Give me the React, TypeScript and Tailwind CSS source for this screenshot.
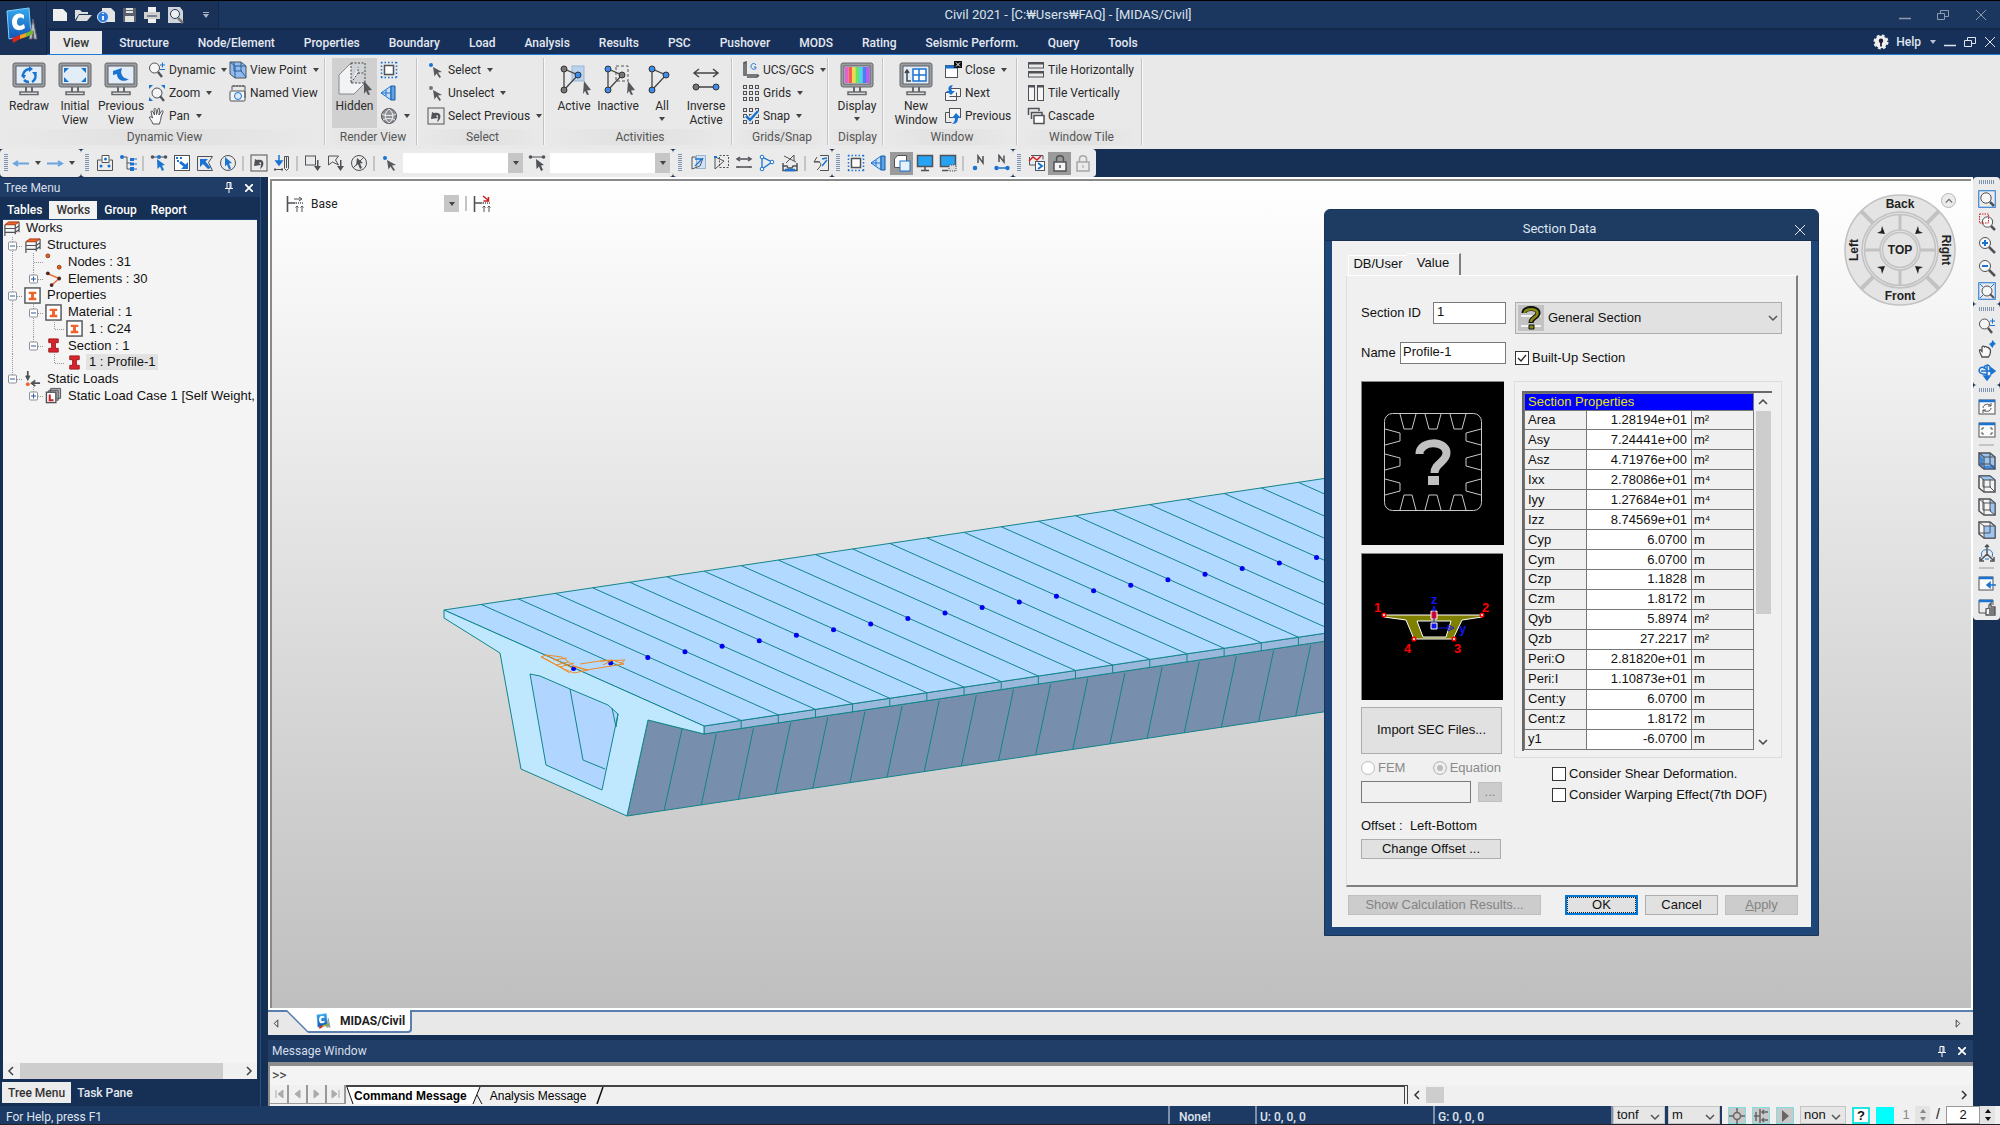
import type { ReactNode } from "react";
import clsx from "clsx";

const UI = "font-['Roboto','Noto_Sans_CJK_KR',sans-serif]";
const DLG = "font-['Liberation_Sans','Noto_Sans_CJK_KR',sans-serif]";

/* ---------- small icons, all drawn on an 18 x 18 grid ---------- */

const G = "#4f5257";
const B = "#1a73d1";

const icons: Record<string, ReactNode> = {
  magPlus: <><circle cx="6.5" cy="7" r="5" fill="#f5f5f5" /><path d="M10 11l4 5" strokeWidth="2.4" /><path d="M12 4h5M14.500 1.500v5M12 8.500h5" stroke={B} /></>,
  magFit: <><circle cx="9" cy="9" r="5" fill="#f5f5f5" /><path d="M12 12l4 5" strokeWidth="2.2" /><path d="M1 5V1h4zM13 1h4v4zM1 13v4h4z" fill={B} stroke="none" /></>,
  hand: <path d="M5 17c-1-3-4-6-3.500-7s2 0 3 1L3 5c0-1.500 1.500-1 2 0l1.500 3L6 2.500c0-1.500 1.500-1.500 2 0l.5 5L10 2c.5-1.500 2-1 1.500.5L11 8l2.500-4c1-1 2 0 1.500 1l-2 5c0 3-1 4-1.500 7z" fill="#fafafa" />,
  cube: <><path d="M1 1h11l5 4v12H6l-5-4z" fill="#8fbcec" /><path d="M1 1l5 4h11M6 5v12M5 1v9h8M12 1v9l5 6" stroke="#2a5d96" /></>,
  camera: <><rect x="1" y="7" width="15" height="10" rx="1" fill="#f5f5f5" /><circle cx="9" cy="12" r="3.500" fill="#dbeafb" stroke={B} /><path d="M3 6V2h13v12M5 1v2M8 1v2M11 1v2M14 1v2" /></>,
  dotSquare: <><rect x="4.500" y="4.500" width="9" height="9" fill="#fff" strokeWidth="1.500" /><path d="M1 1.500h16M1 16.500h16" stroke={B} strokeWidth="1.500" strokeDasharray="1.500 2" /><path d="M1.500 1v16M16.500 1v16" stroke={B} strokeDasharray="1.500 2" strokeWidth="1.500" /></>,
  persp: <><path d="M1 9l10-7v14z" fill="#c7def7" stroke={B} /><path d="M11 2h4v14h-4z" fill="#5ea3e8" stroke="#175a9f" /><path d="M1 9h10M6 6v6" stroke={B} /></>,
  globe: <><circle cx="9" cy="9" r="7.500" fill="#8e9196" /><path d="M2 7c3 2 11 2 14 0M3 13c3-2 9-2 12 0M9 2c-5 4-5 10 0 14M9 2c5 4 5 10 0 14" stroke="#f0f0f0" /></>,
  pick: <><circle cx="4" cy="4" r="2" fill={B} stroke="none" /><path d="M6 6l9 5-4 .5 3 4.500-1.500 1-3-4.500-2 3z" fill="#55585d" stroke="none" /></>,
  unpick: <><circle cx="4" cy="4" r="2" fill="#777" stroke="none" /><path d="M6 6l9 5-4 .5 3 4.500-1.500 1-3-4.500-2 3z" fill="#55585d" stroke="none" /></>,
  undoBox: <><rect x="1" y="1" width="16" height="16" /><path d="M5 5l-1 7 7-1-2-2c2-2 3 1 1 6 5-3 5-11-3-9z" fill={G} stroke="none" /></>,
  ucs: <><path d="M2 1v13h14M2 2l2-1v12M5 16h10l2-2" strokeWidth="1.500" /><path d="M14 4c-2-3-5-1-5 1.500S12 9 14 7.500V6h-2" stroke={B} /></>,
  grids: <>{[1, 7, 13].map((y) => [1, 7, 13].map((x) => <rect key={`${x}-${y}`} x={x + 0.5} y={y + 0.5} width="3" height="3" />))}</>,
  snap: <>{[1, 7, 13].map((y) => [1, 7, 13].map((x) => <rect key={`${x}-${y}`} x={x + 0.5} y={y + 0.5} width="3" height="3" />))}<path d="M4 9l4 4 8-9" stroke="#e9e9e9" strokeWidth="5" /><path d="M4 9l4 4 8-9" stroke={B} strokeWidth="2.500" /></>,
  closeWin: <><rect x="1.500" y="4.500" width="12" height="12" fill="#fff" /><path d="M1.500 5h12v2h-12z" fill={B} stroke={B} /><rect x="10" y="0" width="8" height="7" fill="#111" stroke="none" /><path d="M12 1.500l4 4M16 1.500l-4 4" stroke="#fff" /></>,
  nextWin: <><path d="M5.500 4.500h11v8h-4v4h-11v-8h4z" fill="#f5f5f5" /><path d="M5.500 12.500h7v-4" /><path d="M9 1C4 1 4 5 5 7H2l5 4 4-4H8c-1-2-1-4 1-6z" fill={B} stroke="none" /></>,
  prevWin: <><rect x="5.500" y="1.500" width="11" height="9" fill="#f5f5f5" /><path d="M5.500 5.500h-4v10h6" /><path d="M8 17c5 0 6-3 6-6h3l-5-5-4 5h3c0 3-1 4-3 6z" fill={B} stroke="none" /></>,
  tileH: <><rect x="1.500" y="1.500" width="15" height="5.500" /><rect x="1.500" y="10.500" width="15" height="5.500" /><path d="M1 2.500h16M1 11.500h16" strokeWidth="2" /></>,
  tileV: <><rect x="1.500" y="1.500" width="6" height="15" fill="#f5f5f5" /><rect x="10.500" y="1.500" width="6" height="15" fill="#f5f5f5" /><path d="M1 2.500h7M10 2.500h7" strokeWidth="2" /></>,
  cascade: <><path d="M1.500 8V1.500H12V4M4.500 12V5.500H15V8" strokeWidth="1.500" /><rect x="7" y="8.500" width="10" height="8" fill="#fff" strokeWidth="1.500" /></>,
  arrowL: <path d="M3 9.500h14M6 7L2 9.500 6 12" stroke="#6ba6e0" strokeWidth="2" />,
  arrowR: <path d="M1 9.500h14M12 7l4 2.500-4 2.500" stroke="#6ba6e0" strokeWidth="2" />,
  planeBox: <><path d="M1.500 6v10.500h15V6h-3" /><path d="M6 1.500h7v7H6z" fill="#fff" /><circle cx="9.500" cy="5" r="1.500" fill={B} stroke="none" /><circle cx="5" cy="12" r="1.500" fill={B} stroke="none" /><circle cx="13" cy="12" r="1.500" fill={B} stroke="none" /><path d="M1.500 6h4" /></>,
  treeNodes: <><path d="M3 3h5v12h4M8 9h4" /><circle cx="3" cy="3" r="2" fill={B} stroke="none" /><rect x="11" y="4" width="4" height="3" fill={B} stroke="none" /><rect x="11" y="8.500" width="4" height="3" fill={B} stroke="none" /><rect x="11" y="13" width="4" height="4" fill={B} stroke="none" /><path d="M15 5h3M15 10h3M15 15h3" stroke={B} /></>,
  selLine: <><path d="M2 3h14" /><circle cx="2.500" cy="3" r="1.800" fill={G} stroke="none" /><circle cx="9" cy="3" r="2" fill={B} stroke="none" /><circle cx="15.500" cy="3" r="1.800" fill={G} stroke="none" /><path d="M7 5l8 6-3 .5 2 4.500-2 1-2-4.500-2.500 2.500z" fill={B} stroke="none" /></>,
  selGray: <><path d="M2 3h14" /><circle cx="2.500" cy="3" r="1.800" fill={G} stroke="none" /><circle cx="15.500" cy="3" r="1.800" fill={G} stroke="none" /><path d="M8 5l8 6-3 .5 2 4.500-2 1-2-4.500-2.500 2.500z" fill={G} stroke="none" /></>,
  selWindow: <><rect x="1.500" y="1.500" width="15" height="15" fill="#fff" /><path d="M15 8v7H8l2.500-2.500L6 9l2-2 4.500 3.500z" fill={B} stroke="none" /><path d="M3 4h2M4 7h2M7 4h2" stroke={B} strokeWidth="2" /></>,
  selPoly: <><path d="M1.500 2.500h15l-4 6 4 8h-15z" /><path d="M4 5h8l-2.500 2.500L15 14l-3 1-5-5-3 3z" fill={B} stroke="none" /></>,
  selCircle: <><circle cx="9" cy="9" r="7.500" /><path d="M6 3l7 6-3 .5 2 5-2 1-2-5-2 2z" fill={B} stroke="none" /></>,
  pencil: <><path d="M11.500 2.500h4v12l-2 2-2-2zM13.500 3v11" /><path d="M1 15.500h9M2 14v3M9 14v3" /><path d="M6 1v6M3 7h6l-3 4z" fill={B} stroke={B} strokeWidth="1.500" /></>,
  boxDown: <><rect x="1.500" y="2" width="10" height="9" /><path d="M13 6v6h-3l3.500 5 3.500-5h-2.500V6z" fill={G} stroke="none" /></>,
  polyDown: <><path d="M1.500 2h10l-3 4 3 5-6-3-4 3z" /><path d="M13 6v6h-3l3.500 5 3.500-5h-2.500V6z" fill={G} stroke="none" /></>,
  circX: <><circle cx="9" cy="9" r="7.500" /><path d="M14 3L3 14" /><path d="M7 4l6 5-3 .5 2 4.500-2 1-2-5-2 2z" fill={G} stroke="none" /></>,
  actBox: <><rect x="7.500" y="1.500" width="9" height="13" fill="#cfe2f7" stroke="#9bb5d1" /><path d="M3 3v12l8-3 3-8M3 3h4" /><path d="M6 5h7L6 12" stroke={B} strokeWidth="1.300" /></>,
  inactBox: <><path d="M3 3v12l9-8z" /><path d="M7.500 1.500h9v12h-9z" strokeDasharray="2 1.500" /><path d="M2 3h3" stroke={B} strokeWidth="2" /></>,
  lines2: <><path d="M3 5h12M3 13h12" strokeWidth="1.500" /><path d="M5 3L2 5l3 2M13 3l3 2-3 2M1 13h3M14 13h3" strokeWidth="1.500" /></>,
  tri: <><path d="M4 3v12l10-7z" stroke={B} strokeWidth="1.300" /><circle cx="4" cy="3" r="1.800" fill="#fff" stroke={B} /><circle cx="14" cy="8" r="1.800" fill="#fff" stroke={B} /><circle cx="4" cy="15" r="1.800" fill="#fff" stroke={B} /></>,
  store: <><path d="M2 9v7.500h14V9M2 12h4l1 2h4l1-2h4" strokeWidth="1.500" /><path d="M3 2l12 6M13 1L5 9M13 1v6" /><path d="M4 16h10" stroke={B} strokeWidth="2.500" /></>,
  flip: <><path d="M8 1.500h8.500v15H8M5 3L2 8h6M2 8c6-2 10 2 3 8" /><path d="M10 5l5-1M10 12l5-6" stroke={B} strokeWidth="1.500" /></>,
  shapes: <><path d="M1.500 5l3-3.500h9v9l-3 3h-9z" fill="#fff" /><rect x="7" y="7" width="10" height="10" fill="#e6f1fc" stroke={B} /></>,
  screen: <><rect x="1.500" y="1.500" width="15" height="11" fill="#27a3f3" strokeWidth="1.500" /><path d="M9 13v3M5 16.500h8" strokeWidth="1.500" /></>,
  screenDots: <><rect x="1.500" y="1.500" width="15" height="11" fill="#27a3f3" strokeWidth="1.500" /><path d="M3 16.500h6" strokeWidth="1.500" /><path d="M10 11h7v6h-7z" fill="#ddd" strokeDasharray="1 1" /></>,
  nNode: <><path d="M8 9V2l5 7V2" strokeWidth="1.500" /><circle cx="5" cy="14" r="2.300" fill={B} stroke="none" /></>,
  nElem: <><path d="M6 8V1.500L11 8V1.500" strokeWidth="1.500" /><path d="M4 14h10" stroke={B} strokeWidth="1.500" /><circle cx="3.500" cy="14" r="2.200" fill={B} stroke="none" /><circle cx="14.500" cy="14" r="2.200" fill={B} stroke="none" /></>,
  result: <><path d="M1.500 3v8h6M3 1.500h12v4" /><path d="M1 7l4-4 4 3 4-4" stroke="#d02020" strokeWidth="1.500" /><rect x="7.500" y="7.500" width="9" height="9" fill="#fff" /><path d="M10 9l4 3-4 3" stroke={B} strokeWidth="2" /></>,
  lock: <><path d="M5.500 8V5c0-4.500 7-4.500 7 0v3" strokeWidth="1.500" /><rect x="3" y="8" width="12" height="9" fill="#f4f4f4" strokeWidth="1.500" /><path d="M9 11v3" strokeWidth="1.500" /></>,
  unlock: <g stroke="#a4a6a9"><path d="M5.500 8V5c0-4.500 7-4.500 7 0v3" strokeWidth="1.500" /><rect x="3" y="8" width="12" height="9" strokeWidth="1.500" /><path d="M9 11v3" /></g>,
  zoomAll: <><rect x=".75" y=".75" width="16.500" height="16.500" stroke={B} /><circle cx="8" cy="8" r="5.200" fill="#f7f7f7" /><path d="M12 12l4 4" strokeWidth="2.500" /></>,
  zoomWin: <><circle cx="9.500" cy="9" r="5.200" fill="#f7f7f7" /><path d="M13 13l4 4" strokeWidth="2.500" /><rect x="1.500" y="1" width="9" height="9" stroke="#d02020" strokeDasharray="1.500 1" /></>,
  zoomIn: <><circle cx="7" cy="7" r="5.500" fill="#f7f7f7" /><path d="M11 11l6 6" strokeWidth="2.500" /><path d="M4 7h6M7 4v6" stroke={B} strokeWidth="2" /></>,
  zoomOut: <><circle cx="7" cy="7" r="5.500" fill="#f7f7f7" /><path d="M11 11l6 6" strokeWidth="2.500" /><path d="M4 7h6" stroke={B} strokeWidth="2" /></>,
  zoomFit: <><rect x=".75" y=".75" width="16.500" height="16.500" stroke={B} /><circle cx="9" cy="9" r="5" fill="#f7f7f7" /><path d="M12 12l4 4" strokeWidth="2" /><path d="M2 2l3 3M16 2l-3 3M2 16l3-3" stroke={B} /></>,
  panHand: <><path d="M4 17c-1-3-3-5-2.500-7 1-1 2 1 2.500 1.500V7c1-1.500 2-1 2.500 0 1-1 2-.5 2.500.5 1-.5 2 0 2 1 1.500 0 1.500 1 1.500 3 0 3-1 4-2 5.500z" fill="#fafafa" strokeWidth="1.300" /><path d="M14.500 0l2 2.500L18 4l-2 1-1.500 3L12 5l-1-1 2.500-1.500z" fill={B} stroke="none" /></>,
  orbit: <><path d="M9 2v14M9 17l-3-4h6zM3 8h13M17 8l-4-3v6z" fill={B} stroke={B} strokeWidth="1.500" /><path d="M9 11C3 12 0 9 1.500 6S8 4 9 8M6 6c0-5 6-5 6-1v4" stroke={B} strokeWidth="1.500" /></>,
  winRedraw: <><rect x="1" y="2" width="16" height="14" fill="#fafafa" /><path d="M1 3h16" stroke={B} strokeWidth="2.500" /><path d="M5 10c0-4 6-5 8-2M13 10c0 4-6 4-8 2M13 5v3h-3M5 15v-3h3" /></>,
  winFit: <><rect x="1" y="2" width="16" height="14" fill="#fafafa" /><path d="M1 3h16" stroke={B} strokeWidth="2.500" /><path d="M4 9V7h2M12 7h2v2M4 11v2h2M12 13h2v-2" /></>,
  cubeIso: <><path d="M1 1h11l5 4v12H6l-5-4z" fill="#9dc5f0" strokeWidth="1.500" /><path d="M2 3l3 3v9l-3-2zM6 14l11-1v4H6z" fill={B} stroke="none" opacity=".7" /><path d="M1 1l5 4h11M6 5v12M12 1v11l5 5M12 12H2" strokeWidth="1.200" /></>,
  cubeTop: <><path d="M1 1h11l5 4v12H6l-5-4z" fill="#f4f4f4" strokeWidth="1.500" /><path d="M1 1h11l5 4H6z" fill="#9dc5f0" /><path d="M6 5v12M5 4v8h8M12 4v8l5 5" /></>,
  cubeRight: <><path d="M1 1h11l5 4v12H6l-5-4z" fill="#f4f4f4" strokeWidth="1.500" /><path d="M12 1l5 4v12l-5-4z" fill="#9dc5f0" /><path d="M1 1l5 4h11M6 5v12M5 12h8M5 1v11" /></>,
  cubeFront: <><path d="M1 1h11l5 4v12H6l-5-4z" fill="#f4f4f4" strokeWidth="1.500" /><path d="M6 5h11v12H6z" fill="#9dc5f0" /><path d="M1 1l5 4M12 1v11H1" /></>,
  axes: <><path d="M9 2v8l-6 6M9 10l6 6M7 3l2-2 2 2M2 13v4h4M12 17h4v-4" strokeWidth="1.500" /><path d="M4 13c-2-5 2-8 4-7M14 13c2-5-2-8-4-7M7 15h4" stroke={B} /></>,
  winArrow: <><rect x="1" y="2" width="14" height="13" fill="#fafafa" /><path d="M1 3h14" stroke={B} strokeWidth="2.500" /><path d="M18 10h-6M12 7.500L9 10l3 2.500z" fill={B} stroke={B} strokeWidth="1.500" /></>,
  winHand: <><path d="M8 15H1V2h14v5" /><path d="M1 3h14" stroke={B} strokeWidth="2.500" /><path d="M8 17V11l3-1V7l2-2v4h4v8zM11 11h6M11 13h6M11 15h6" fill="#f4f4f4" strokeWidth="1.300" /></>,
  stage: <><path d="M1.500 1v16M1.500 8h8" strokeWidth="1.600" /><path d="M8 4h7M13 2l3 2-3 2" /><path d="M10 8h8" strokeDasharray="1 1" strokeWidth="1.500" /><path d="M11 17v-6M9.500 12.500L11 11l1.500 1.500M16 17v-6M14.500 12.500L16 11l1.500 1.500" /></>,
  stageRed: <><path d="M1.500 1v16M1.500 8h8" strokeWidth="1.600" /><path d="M10 1l5 4M15.500 2v4h-5" stroke="#c81e1e" strokeWidth="1.500" /><path d="M10 8h8" strokeDasharray="1 1" strokeWidth="1.500" /><path d="M11 17v-6M9.500 12.500L11 11l1.500 1.500M16 17v-6M14.500 12.500L16 11l1.500 1.500" /></>,
  newFile: <path d="M2 3h10l4 4v8H2z" fill="#eee" stroke="none" />,
  openFile: <path d="M1 14V4h5l2 2h6v2H5zM5 9h13l-5 6H2z" fill="#ddd" stroke="none" />,
  infoFile: <><path d="M5 2h9l4 4v10H5z" fill="#e4e4e4" stroke="none" /><circle cx="6" cy="11" r="5.500" fill="#2f7be0" stroke="#dfe8f5" /><path d="M6 7v1M6 10v4" stroke="#fff" strokeWidth="1.800" /></>,
  save: <><path d="M3 2h13v14H3z" fill="#59606c" stroke="none" /><path d="M6 2h7v5H6zM5 10h9v6H5z" fill="#e2e2e2" stroke="none" /><path d="M6 4.500h7" stroke="#59606c" /></>,
  print: <><path d="M5 1h8v5H5zM5 12h8v5H5z" fill="#eee" stroke="none" /><path d="M1 6h16v7H1z" fill="#cfcfcf" stroke="none" /><path d="M4 10h10" stroke="#24395c" /></>,
  preview: <><path d="M2 1h12l3 4v12H2z" fill="#cfd3da" stroke="none" /><circle cx="9" cy="8" r="4.500" fill="#eee" stroke="#24395c" /><path d="M12 12l5 5" stroke="#777" strokeWidth="2.500" /></>,
  frame: <><path d="M2 5l4-3h11l-4 3z" fill="#f0622b" stroke="#a33c12" /><path d="M2 5v12M13 5v10M17 2v11M2 9h11l4-3M2 13h11l4-3" strokeWidth="1.300" /></>,
  nodes: <><circle cx="3" cy="3" r="2" fill="#e8641e" stroke="#8a3a10" /><circle cx="15" cy="15" r="2" fill="#e8641e" stroke="#8a3a10" /></>,
  elems: <><path d="M3 4l12 5-8 7" stroke="#f0703a" strokeWidth="1.500" /><g fill="#4a2a24" stroke="none"><circle cx="3" cy="3.500" r="2" /><circle cx="15" cy="9" r="2" /><circle cx="7" cy="16" r="2" /></g></>,
  ibeam: <><rect x="1" y="1" width="16" height="16" fill="#fff" strokeWidth="1.500" /><path d="M5 5h8v2.500h-2.500v4H13V14H5v-2.500h2.500v-4H5z" fill="#f0622b" stroke="none" /></>,
  section: <path d="M4 2h10v4h-3v6h3v4H4v-4h3V6H4z" fill="#d8232c" stroke="#9c1a20" />,
  loads: <><path d="M4 1v8M2 6l2 4 2-4M17 14H9M12 11l-4 3 4 3" strokeWidth="1.800" /><circle cx="4" cy="15" r="2" fill="#f0622b" stroke="none" /></>,
  loadCase: <><path d="M6 5V1.500h10.500V12H13M4 7V3.500h10V14H12" fill="#b5b5b5" /><rect x="1.500" y="5.500" width="10" height="11" fill="#fff" strokeWidth="1.500" /><path d="M5 8v6h4" stroke="#c9202a" strokeWidth="2.200" /></>,
};

function Icon({ name, size = "h-[18px] w-[18px]" }: { name: string; size?: string }) {
  return <svg viewBox="0 0 18 18" className={clsx(size, "shrink-0")} fill="none" stroke={G} aria-hidden>{icons[name]}</svg>;
}

function Caret() {
  return <span className="block h-0 w-0 border-x-[3px] border-t-[4px] border-x-transparent border-t-[#444]" />;
}

function Chevron({ d, className = "h-[10px] w-[10px]" }: { d: string; className?: string }) {
  return <svg viewBox="0 0 10 10" className={clsx("shrink-0", className)} fill="none" stroke="currentColor" strokeWidth="1.500" aria-hidden><path d={d} /></svg>;
}

const UP = "M1 7l4-4 4 4";
const DOWN = "M1 3l4 4 4-4";
const LEFT = "M7 1L3 5l4 4";
const RIGHT = "M3 1l4 4-4 4";

function Logo({ className }: { className: string }) {
  return (
    <svg viewBox="0 0 34 36" className={className} aria-hidden>
      <defs>
        <linearGradient id="logo" x1="0" y1="0" x2="0" y2="1"><stop offset="0" stopColor="#36a9ee" /><stop offset="1" stopColor="#1254b4" /></linearGradient>
      </defs>
      <path d="M3 4l22-3 2 27-22 4z" fill="url(#logo)" stroke="#7fd0ff" />
      <path d="M20 8c-6-4-12 0-12 7s6 11 13 6l-1-4c-4 3-7 2-7-2s3-6 7-3z" fill="#fff" />
      <path d="M29 12l-4 20h3l1-8 1 8h3z" fill="#b9bec6" stroke="#5d636d" />
      <path d="M8 31l8-3v4l-7 4z" fill="#d8291c" /><path d="M16 28l6-2v4l-6 2z" fill="#f3a321" /><path d="M22 26l7-3v4l-7 3z" fill="#78b82a" />
    </svg>
  );
}

/* ---------- header ---------- */

const menu = ["View", "Structure", "Node/Element", "Properties", "Boundary", "Load", "Analysis", "Results", "PSC", "Pushover", "MODS", "Rating", "Seismic Perform.", "Query", "Tools"];

function WinGlyph({ kind }: { kind: "min" | "max" | "close" }) {
  return (
    <svg viewBox="0 0 12 12" className="h-[12px] w-[12px]" fill="none" stroke="currentColor" aria-hidden>
      {kind === "min" && <path d="M0 9.500h12" strokeWidth="1.500" />}
      {kind === "max" && <path d="M.5 4.500h7v6h-7zM3.500 4V1.500h8v6H8" />}
      {kind === "close" && <path d="M1 1l10 10M11 1L1 11" />}
    </svg>
  );
}

function Header() {
  return (
    <header className="flex border-t border-black bg-[#17305a]">
      <button aria-label="Application menu" className="flex w-[47px] shrink-0 items-start justify-center border-r border-[#122747] bg-[#1a3257] pt-[6px] pr-[4px]">
        <Logo className="h-[36px] w-[34px]" />
      </button>
      <div className="min-w-0 flex-1">
        <div className="flex h-[29px] items-center border-b-2 border-[#13294a] bg-[#1c375f]">
          <div className="flex h-full w-[172px] shrink-0 items-center gap-[5px] border-r border-[#13294a] bg-[#1a3257] pl-[4px]">
            {["newFile", "openFile", "infoFile", "save", "print", "preview"].map((n) => (
              <button key={n} aria-label={n} className="flex"><Icon name={n} /></button>
            ))}
            <button aria-label="Customize" className="ml-[14px] flex flex-col items-center gap-px">
              <span className="h-px w-[6px] bg-[#aab4c4]" />
              <span className="h-0 w-0 border-x-[3px] border-t-[4px] border-x-transparent border-t-[#aab4c4]" />
            </button>
          </div>
          <h1 className="flex-1 pl-[31px] text-center text-[13px] text-[#dbe2ec]">Civil 2021 - [C:₩Users₩FAQ] - [MIDAS/Civil]</h1>
          <div className="flex text-[#8d9aaf]">
            {(["min", "max", "close"] as const).map((k) => (
              <button key={k} aria-label={k} className="flex w-[38px] justify-center"><WinGlyph kind={k} /></button>
            ))}
          </div>
        </div>
        <nav className="flex h-[25px] items-end border-b border-[#1c7bd6] pl-[3px]">
          {menu.map((m, i) => (
            <button key={m} className={clsx("h-[23px] text-[12px] font-medium", i === 0 ? "mr-[2px] bg-[#ebebeb] px-[13px] text-[#333]" : "pr-[14px] pl-[15px] text-[#e4e9f1]")}>{m}</button>
          ))}
          <div className="ml-auto flex h-full items-center text-[#dfe5ee]">
            <svg viewBox="0 0 18 18" className="mr-[7px] h-[16px] w-[16px]" aria-hidden><circle cx="9" cy="9" r="7" fill="#eee" stroke="#eee" strokeWidth="3" strokeDasharray="3 2.500" /><circle cx="9" cy="7.500" r="2.500" fill="#223" /><path d="M9 8v6" stroke="#223" strokeWidth="2" /></svg>
            <button className="text-[12px] font-medium">Help</button>
            <span className="mr-[4px] ml-[9px] h-0 w-0 border-x-[3px] border-t-[4px] border-x-transparent border-t-[#b8c2d2]" />
            {(["min", "max", "close"] as const).map((k) => (
              <button key={k} aria-label={`${k} document`} className="flex w-[20px] justify-center"><WinGlyph kind={k} /></button>
            ))}
          </div>
        </nav>
      </div>
    </header>
  );
}

/* ---------- ribbon ---------- */

function Monitor({ children, screen = "#e3edf8" }: { children?: ReactNode; screen?: string }) {
  return (
    <svg viewBox="0 0 34 34" className="h-[34px] w-[34px] shrink-0" fill="none" aria-hidden>
      <rect x="1" y="1" width="32" height="24" rx="2" fill="#9b9da0" stroke="#65686c" />
      <rect x="4" y="4" width="26" height="18" fill={screen} stroke="#5c5f63" />
      <path d="M14 25v5M20 25v5" stroke="#65686c" strokeWidth="2" />
      <path d="M8 32.500v-2.500h18v2.500z" fill="#fff" stroke="#65686c" strokeWidth="1.500" />
      {children}
    </svg>
  );
}

function Nodes3({ kind }: { kind: "active" | "inactive" | "all" }) {
  const side = kind === "active" ? "#777" : "#3c8cf0";
  const tip = kind === "inactive" ? "#777" : "#3c8cf0";
  return (
    <svg viewBox="0 0 34 34" className="h-[34px] w-[34px] shrink-0" fill="none" aria-hidden>
      {kind === "active" && <rect x="15" y="4" width="12" height="15" fill="#bcd3ee" stroke="#9ab5d4" />}
      {kind === "inactive" && <rect x="15" y="4" width="12" height="15" stroke="#555" strokeDasharray="3 2" />}
      <path d="M7 7v21L21 13z" stroke="#444" strokeWidth="1.300" />
      <circle cx="7" cy="7" r="3" fill={side} stroke="#333" />
      <circle cx="7" cy="28" r="3" fill={side} stroke="#333" />
      <circle cx="21" cy="13" r="3" fill={tip} stroke="#333" />
      {kind !== "all" && <path d="M27 19l7 9-4 .5 2 4-2 .5-2-4-2 3z" fill="#55585d" />}
    </svg>
  );
}

function BigButton({ icon, label, width, caret, active }: { icon: ReactNode; label: string[]; width: string; caret?: boolean; active?: boolean }) {
  return (
    <button className={clsx("flex h-[70px] flex-col items-center pt-[4px] text-[12px] leading-[14px]", width, active && "bg-[#d0d0d0]")}>
      {icon}
      <span className="mt-[3px] text-center">{label.map((l) => <span key={l} className="block whitespace-nowrap">{l}</span>)}</span>
      {caret && <span className="mt-[4px]"><Caret /></span>}
    </button>
  );
}

function SmallButton({ icon, label, caret }: { icon: string; label?: string; caret?: boolean }) {
  return (
    <button aria-label={label ?? icon} className="flex h-[23px] items-center gap-[3px] text-[12px] whitespace-nowrap">
      <Icon name={icon} />
      {label}
      {caret && <span className="ml-[3px]"><Caret /></span>}
    </button>
  );
}

function Group({ title, width, children }: { title: string; width: string; children: ReactNode }) {
  return (
    <section className={clsx("flex shrink-0 flex-col pt-[3px] pb-[4px]", width)}>
      <div className="flex h-[87px] flex-col border-r border-[#c3c3c3] shadow-[1px_0_0_#f8f8f8]">
        <div className="flex h-[71px] shrink-0 items-start">{children}</div>
        <h2 className="bg-linear-to-r from-transparent via-[#e0e0e0] to-transparent pl-[5px] text-center text-[12px] leading-[16px] text-[#555]">{title}</h2>
      </div>
    </section>
  );
}

function Ribbon() {
  return (
    <div className="flex h-[94px] overflow-hidden bg-[#e9e9e9] text-[#2b2b2b]">
      <Group title="Dynamic View" width="w-[325px]">
        <BigButton width="ml-[6px] w-[46px]" label={["Redraw"]} icon={<Monitor><path d="M11 15a7 7 0 0 1 6-8M23 11a7 7 0 0 1-3 9M17 20a7 7 0 0 1-5-2" stroke={B} strokeWidth="2.500" /><path d="M17 4l4 3-4 3zM9 13l5 0-2 4zM20 10l5 0-2 4z" fill={B} /></Monitor>} />
        <BigButton width="w-[46px]" label={["Initial", "View"]} icon={<Monitor><path d="M6 6h5l-5 5zM28 6v5l-5-5zM6 20v-5l5 5zM28 20h-5l5-5z" fill={B} /></Monitor>} />
        <BigButton width="w-[46px]" label={["Previous", "View"]} icon={<Monitor><path d="M9 9l9-3-1 4c1 5 4 7 8 7-6 4-12 1-12-5l-4 1z" fill={B} /></Monitor>} />
        <div className="ml-[4px] w-[81px]">
          <SmallButton icon="magPlus" label="Dynamic" caret />
          <SmallButton icon="magFit" label="Zoom" caret />
          <SmallButton icon="hand" label="Pan" caret />
        </div>
        <div>
          <SmallButton icon="cube" label="View Point" caret />
          <SmallButton icon="camera" label="Named View" />
        </div>
      </Group>
      <Group title="Render View" width="w-[92px]">
        <BigButton active width="ml-[7px] w-[45px]" label={["Hidden"]} icon={
          <svg viewBox="0 0 34 34" className="h-[34px] w-[34px] shrink-0" fill="none" aria-hidden>
            <path d="M1 13L12 2h14v20L16 32H1z" fill="#f1f3f5" stroke="#888" />
            <path d="M13 1h14v20H13zM13 21l7-10V5M20 11h7" fill="#cfd2d6" stroke="#444" strokeDasharray="2 1.500" />
            <path d="M26 19l8 9-4 .5 2 4-2 .5-2-4-2 3z" fill="#55585d" />
          </svg>} />
        <div className="ml-[3px]">
          <SmallButton icon="dotSquare" />
          <SmallButton icon="persp" />
          <SmallButton icon="globe" caret />
        </div>
      </Group>
      <Group title="Select" width="w-[127px]">
        <div className="ml-[10px]">
          <SmallButton icon="pick" label="Select" caret />
          <SmallButton icon="unpick" label="Unselect" caret />
          <SmallButton icon="undoBox" label="Select Previous" caret />
        </div>
      </Group>
      <Group title="Activities" width="w-[188px]">
        <BigButton width="ml-[8px] w-[44px]" label={["Active"]} icon={<Nodes3 kind="active" />} />
        <BigButton width="w-[44px]" label={["Inactive"]} icon={<Nodes3 kind="inactive" />} />
        <BigButton width="w-[44px]" label={["All"]} caret icon={<Nodes3 kind="all" />} />
        <BigButton width="w-[44px]" label={["Inverse", "Active"]} icon={
          <svg viewBox="0 0 34 34" className="h-[34px] w-[34px] shrink-0" fill="none" aria-hidden>
            <path d="M6 11h22M10 7l-5 4 5 4M24 7l5 4-5 4M8 25h18" stroke="#444" strokeWidth="1.500" />
            <circle cx="7" cy="25" r="3" fill="#777" stroke="#333" /><circle cx="27" cy="25" r="3" fill="#3c8cf0" stroke="#333" />
          </svg>} />
      </Group>
      <Group title="Grids/Snap" width="w-[96px]">
        <div className="ml-[10px]">
          <SmallButton icon="ucs" label="UCS/GCS" caret />
          <SmallButton icon="grids" label="Grids" caret />
          <SmallButton icon="snap" label="Snap" caret />
        </div>
      </Group>
      <Group title="Display" width="w-[55px]">
        <BigButton width="ml-[6px] w-[46px]" label={["Display"]} caret icon={<Monitor>{["#e85fd0", "#f25a5a", "#f5d84a", "#6fe05c", "#46d8e8", "#4a7df0", "#b65cf0"].map((c, i) => <rect key={c} x={5 + i * 3.5} y="5" width="3.500" height="16" fill={c} />)}</Monitor>} />
      </Group>
      <Group title="Window" width="w-[134px]">
        <BigButton width="ml-[8px] w-[50px]" label={["New", "Window"]} icon={<Monitor><path d="M8 9v10h4M6 11l2-3 2 3" stroke="#444" strokeWidth="1.500" /><path d="M14 7h13v12H14zM14 13h13M20 7v12" stroke={B} strokeWidth="1.500" fill="#fff" /></Monitor>} />
        <div className="ml-[3px]">
          <SmallButton icon="closeWin" label="Close" caret />
          <SmallButton icon="nextWin" label="Next" />
          <SmallButton icon="prevWin" label="Previous" />
        </div>
      </Group>
      <Group title="Window Tile" width="w-[125px]">
        <div className="ml-[10px]">
          <SmallButton icon="tileH" label="Tile Horizontally" />
          <SmallButton icon="tileV" label="Tile Vertically" />
          <SmallButton icon="cascade" label="Cascade" />
        </div>
      </Group>
    </div>
  );
}

/* ---------- icon toolbar ---------- */

function Grip() {
  return <span className="mx-[4px] h-[18px] w-[4px] bg-[repeating-linear-gradient(#7e93b0_0_1px,transparent_1px_2px)]" />;
}

function Tool({ name, active }: { name: string; active?: boolean }) {
  return <button aria-label={name} className={clsx("flex h-[23px] w-[23px] shrink-0 items-center justify-center", active && "bg-[#9b9b9b]")}><Icon name={name} /></button>;
}

function Tools({ names, active }: { names: string[]; active?: string }) {
  return names.map((n, i) => n === "|" ? <span key={i} className="mx-[3px] h-[15px] w-[2px] bg-[#c4c4c4]" /> : <Tool key={i} name={n} active={n === active} />);
}

function DropBox({ label, value, width }: { label: string; value?: string; width: string }) {
  return (
    <span className={clsx("relative flex h-[20px] shrink-0", width)}>
      <select aria-label={label} className="w-full appearance-none bg-white text-[12px] outline-none"><option>{value}</option></select>
      <span className="pointer-events-none absolute inset-y-0 right-0 flex w-[15px] items-center justify-center bg-[#c6c6c6]"><Caret /></span>
    </span>
  );
}

function Toolbar() {
  return (
    <div className="flex h-[28px] text-[#333]">
      <div className="flex items-center rounded bg-[#ebebeb] pr-px">
        <Grip /><Icon name="arrowL" /><span className="mx-[5px]"><Caret /></span><Icon name="arrowR" /><span className="mx-[5px]"><Caret /></span>
      </div>
      <div className="flex items-center rounded bg-[#ebebeb]">
        <Grip />
        <Tools names={["planeBox", "treeNodes", "|", "selLine", "selWindow", "selPoly", "selCircle", "|", "undoBox", "pencil", "|", "boxDown", "polyDown", "circX", "|", "pick"]} />
        <DropBox label="Select nodes" width="mx-[2px] w-[120px]" />
        <Tool name="selGray" />
        <DropBox label="Select elements" width="mr-[3px] ml-[2px] w-[120px]" />
      </div>
      <div className="flex items-center rounded bg-[#ebebeb] pl-px">
        <Grip /><Tools names={["actBox", "inactBox", "lines2", "tri", "store", "|", "flip"]} />
      </div>
      <div className="flex items-center rounded bg-[#ebebeb]">
        <Grip /><Tools names={["dotSquare", "persp", "shapes", "screen", "screenDots", "|", "nNode", "nElem"]} active="shapes" />
      </div>
      <div className="flex items-center rounded bg-[#ebebeb] pr-[2px]">
        <Grip /><Tools names={["result", "lock", "unlock"]} active="lock" />
      </div>
    </div>
  );
}

/* ---------- tree panel ---------- */

type Guide = "" | "v" | "t" | "l" | "+" | "-" | "+e" | "-e";

const tree: { text: string; icon: string; guides: Guide[]; selected?: boolean }[] = [
  { text: "Works", icon: "frame", guides: [] },
  { text: "Structures", icon: "frame", guides: ["-"] },
  { text: "Nodes : 31", icon: "nodes", guides: ["v", "t"] },
  { text: "Elements : 30", icon: "elems", guides: ["v", "+e"] },
  { text: "Properties", icon: "ibeam", guides: ["-"] },
  { text: "Material : 1", icon: "ibeam", guides: ["v", "-"] },
  { text: "1 : C24", icon: "ibeam", guides: ["v", "v", "l"] },
  { text: "Section : 1", icon: "section", guides: ["v", "-e"] },
  { text: "1 : Profile-1", icon: "section", guides: ["v", "", "l"], selected: true },
  { text: "Static Loads", icon: "loads", guides: ["-e"] },
  { text: "Static Load Case 1 [Self Weight,", icon: "loadCase", guides: ["", "+e"] },
];

function GuideCell({ kind }: { kind: Guide }) {
  const box = kind.startsWith("+") || kind.startsWith("-");
  const ends = kind === "l" || kind.endsWith("e");
  return (
    <svg viewBox="0 0 21 17" className="h-[17px] w-[21px] shrink-0 overflow-visible" fill="none" aria-hidden>
      {kind && <path d={ends ? "M9.500 0v9" : "M9.500 0v17"} stroke="#999" strokeDasharray="1 1" />}
      {kind && kind !== "v" && <path d="M10 9.500h10" stroke="#999" strokeDasharray="1 1" />}
      {box && <rect x="5.500" y="5" width="8" height="8" rx="1" fill="#fff" stroke="#8a8f98" />}
      {box && <path d={kind[0] === "+" ? "M7 9h5M9.500 6.500v5" : "M7 9h5"} stroke="#35599c" />}
    </svg>
  );
}

function PinClose() {
  return (
    <span className="ml-auto flex items-center gap-[12px] text-white">
      <button aria-label="Pin"><svg viewBox="0 0 8 11" className="h-[11px] w-[8px]" fill="none" stroke="currentColor"><path d="M2 .5h4v6H2zM5 1v5M0 6.500h8M4 7v4" /></svg></button>
      <button aria-label="Close"><svg viewBox="0 0 8 8" className="h-[8px] w-[8px]" stroke="currentColor" strokeWidth="1.800"><path d="M0 0l8 8M8 0L0 8" /></svg></button>
    </span>
  );
}

function TreePanel() {
  return (
    <aside className="flex w-[261px] shrink-0 flex-col border-r border-[#2a4f86] pt-px">
      <div className="flex h-[19px] items-center bg-[#1f3d66] pr-[7px] pl-[4px] text-[12px] text-[#d7deea]">Tree Menu<PinClose /></div>
      <div className="flex h-[22px] items-end text-[12px] font-medium text-white">
        {["Tables", "Works", "Group", "Report"].map((t) => (
          <button key={t} className={clsx("h-[18px] px-[7px]", t === "Works" && "bg-[#f2f2f2] text-[#333]")}>{t}</button>
        ))}
      </div>
      <div className={clsx("mr-[3px] ml-[3px] flex min-h-0 flex-1 flex-col overflow-hidden border-t border-[#1f4374] bg-[#f4f4f4]", DLG)}>
        <ul className="flex h-[184px] flex-col text-[13px] leading-[16px] text-[#111]">
          {tree.map((row) => (
            <li key={row.text} className="flex min-h-0 flex-1 items-center whitespace-nowrap">
              {row.guides.map((g, i) => <GuideCell key={i} kind={g} />)}
              <Icon name={row.icon} size="h-[17px] w-[17px]" />
              <span className={clsx("ml-[3px] px-[3px]", row.selected && "bg-[#e2e2e2]")}>{row.text}</span>
            </li>
          ))}
        </ul>
        <div className="mt-auto flex h-[16px] items-center bg-[#f0f0f0] px-[3px] text-[#444]">
          <Chevron d={LEFT} />
          <span className="mr-[21px] ml-[4px] h-[16px] flex-1 bg-[#cdcdcd]" />
          <Chevron d={RIGHT} />
        </div>
      </div>
      <div className="flex h-[27px] items-start pt-[3px] pl-[2px] text-[12px] font-medium">
        <button className="h-[21px] bg-[#ececec] px-[6px] text-[#333]">Tree Menu</button>
        <button className="h-[21px] px-[6px] text-[#e4e9f1]">Task Pane</button>
      </div>
    </aside>
  );
}

/* ---------- model view ---------- */

const COUNT = 30;
const DX = 37.15;
const DY = -5.55;
const shift = (x: number, y: number, i: number) => `${x + DX * i},${y + DY * i}`;

// coordinates are window ones; the group is shifted by the view's own origin
function BridgeModel() {
  const idx = Array.from({ length: COUNT + 1 }, (_, i) => i);
  return (
    <svg className="absolute inset-0 h-full w-full" fill="none" stroke="#12848a" strokeWidth="1" aria-label="Box girder model">
      <g transform="translate(-272 -181)">
        <polygon points={`627,816 648,720 704,734 ${shift(704, 734, COUNT)} ${shift(627, 816, COUNT)}`} fill="#778fac" />
        <polygon points={`704,726 ${shift(704, 726, COUNT)} ${shift(704, 734, COUNT)} 704,734`} fill="#9ab8dc" />
        <polygon points={`444,610 ${shift(444, 610, COUNT)} ${shift(704, 726, COUNT)} 704,726`} fill="#b2d9ff" />
        {idx.slice(1).map((i) => (
          <g key={i}>
            <polyline points={`${shift(444, 610, i)} ${shift(704, 726, i)} ${shift(704, 734, i)}`} />
            <polyline points={`${shift(627, 816, i)} ${i === 1 ? "682,729" : shift(642, 745, i)}`} />
          </g>
        ))}
        <polygon points="444,610 704,726 704,734 648,720 627,816 521,769 500,653 444,618" fill="#bfe8ff" />
        <polygon points="530,674 540,676 570,689 608,705 618,714 602,790 546,765" fill="#b0d6ff" />
        <polyline points="570,689 583,760 605,769" />
        <polyline points="612,708 616,727 618,714" />
        {idx.map((i) => <circle key={i} cx={573.500 + DX * i} cy={668.500 + DY * i} r="2.500" fill="#0000f0" stroke="none" />)}
        <path d="M541 657l5-2 16 2 12 9 14 4-14 3-10-4zM541 657l5 2 24 14M546 655l26 13M553 660l14-2M556 665l12-3M560 667l14-4M572 666l14 4 38-6-12-4-12 1-20 3M600 661l25-1-6 5M603 665l8-4" stroke="#f08a24" />
      </g>
    </svg>
  );
}

function Compass() {
  return (
    <svg viewBox="-60 -60 120 120" className="absolute top-[9px] right-[11px] h-[120px] w-[120px] font-['Liberation_Sans',sans-serif]" textAnchor="middle" aria-label="View compass">
      <g fill="#e4e4e4" stroke="#c2c2c2" strokeWidth="1.500">
        <circle r="55" />
        <path d="M-39-39L-26-26M39-39L26-26M-39 39L-26 26M39 39L26 26" strokeWidth="4" />
        <circle r="38" /><circle r="35.500" />
        <path d="M0-36v72M-36 0h72" strokeWidth="3" />
        <circle r="20" /><circle r="17.500" />
      </g>
      <path d="M-15-16l-8-1 4-2 1-5zM15-16l8-1-4-2-1-5zM-15 16l-8 1 4 2 1 5zM15 16l8 1-4 2-1 5z" fill="#222" />
      <g className="text-[12px] font-bold" fill="#222">
        <text y="-42">Back</text><text y="50">Front</text><text y="4">TOP</text>
        <text transform="rotate(-90)" y="-42">Left</text><text transform="rotate(90)" y="-42">Right</text>
      </g>
    </svg>
  );
}

function ModelView({ children }: { children: ReactNode }) {
  return (
    <div className="relative min-h-0 flex-1 border-2 border-white bg-white">
      <div className="relative h-full overflow-hidden border-t-2 border-l-2 border-[#8a8a8a] bg-linear-to-b from-white to-[#bfbfbf]">
        <BridgeModel />
        <div className="relative flex h-[45px] items-center pl-[14px] text-[12px] text-[#222]">
          <Icon name="stage" />
          <label className="relative ml-[3px] flex w-[152px] items-center">
            <select aria-label="Stage" className="w-full appearance-none bg-transparent px-[4px] outline-none"><option>Base</option></select>
            <span className="pointer-events-none absolute right-0 flex h-[17px] w-[15px] items-center justify-center bg-[#c6c6c6]"><Caret /></span>
          </label>
          <span className="mx-[6px] h-[15px] w-[2px] bg-[#c4c4c4]" />
          <Icon name="stageRed" />
        </div>
        <Compass />
        <button aria-label="Collapse compass" className="absolute top-[12px] right-[15px] flex h-[15px] w-[15px] items-center justify-center rounded-full border border-[#b5b5b5] bg-[#ececec] text-[#666]"><Chevron d={UP} className="h-[8px] w-[8px]" /></button>
        {children}
      </div>
    </div>
  );
}

/* ---------- section dialog ---------- */

const props = [
  ["Area", "1.28194e+01", "m²"], ["Asy", "7.24441e+00", "m²"], ["Asz", "4.71976e+00", "m²"],
  ["Ixx", "2.78086e+01", "m⁴"], ["Iyy", "1.27684e+01", "m⁴"], ["Izz", "8.74569e+01", "m⁴"],
  ["Cyp", "6.0700", "m"], ["Cym", "6.0700", "m"], ["Czp", "1.1828", "m"], ["Czm", "1.8172", "m"],
  ["Qyb", "5.8974", "m²"], ["Qzb", "27.2217", "m²"], ["Peri:O", "2.81820e+01", "m"], ["Peri:I", "1.10873e+01", "m"],
  ["Cent:y", "6.0700", "m"], ["Cent:z", "1.8172", "m"], ["y1", "-6.0700", "m"],
];

const BTN = "border border-[#adadad] bg-[#e1e1e1] text-[#111]";
const BTN_OFF = "border border-[#bfbfbf] bg-[#cccccc] text-[#838383]";
const BOX = "border border-[#7a7a7a] bg-white";

function Check({ label, checked }: { label: string; checked?: boolean }) {
  return (
    <label className="flex items-center gap-[3px]">
      <span className="relative flex">
        <input type="checkbox" defaultChecked={checked} className="peer h-[14px] w-[14px] appearance-none border border-[#333] bg-white" />
        <svg viewBox="0 0 14 14" className="pointer-events-none absolute inset-0 hidden peer-checked:block" fill="none" stroke="#222" strokeWidth="1.300"><path d="M3 7l3 3 5-6" /></svg>
      </span>
      {label}
    </label>
  );
}

function UnknownShape() {
  const notch = [0, 25, 50];
  return (
    <svg viewBox="0 0 142 163" className="block w-full border-t border-l border-[#888] bg-black" fill="none" stroke="#c8c8c8" aria-hidden>
      <rect x="22.500" y="31.500" width="97" height="97" rx="8" />
      {notch.map((n) => (
        <g key={n}>
          <path d={`M${38 + n} 32l4 15h8l4-15M${38 + n} 128l4-15h8l4 15`} />
          <path d={`M23 ${47 + n}l15 4v8l-15 4M119 ${47 + n}l-15 4v8l15 4`} />
        </g>
      ))}
      <path d="M57.500 72c0-14 27-14 27-1 0 9-12 10-12 20" stroke="#c0c0c0" strokeWidth="8" />
      <path d="M66 94h11v9H66z" fill="#c0c0c0" stroke="none" />
    </svg>
  );
}

function SectionPreview() {
  return (
    <svg viewBox="0 0 141 146" className="block w-full border-t border-l border-[#888] bg-black text-[13px]" aria-hidden>
      <path d="M22 61h98v2l-20 3-9 19H52l-8-19-22-3z" fill="#808000" stroke="#fff" />
      <path d="M55 67h34l-5 16H61z" fill="#000" stroke="#fff" />
      <g fill="#fff" stroke="#f00" strokeWidth="1.500"><circle cx="22" cy="61" r="1.800" /><circle cx="120" cy="61" r="1.800" /><circle cx="92" cy="85" r="1.800" /><circle cx="52" cy="85" r="1.800" /></g>
      <path d="M69 57h6v8h-6z" fill="#f00" stroke="#fff" />
      <path d="M72 53v21h17M70 57l2-5 2 5M86 71l6 3-6 3z" fill="none" stroke="#1414f0" />
      <path d="M69 69h6v6h-6z" fill="#1414f0" stroke="#fff" />
      <g fill="#f00" className="font-bold"><text x="12" y="58">1</text><text x="120" y="58">2</text><text x="92" y="99">3</text><text x="42" y="99">4</text></g>
      <text x="69" y="50" fill="#1414f0" className="font-bold">z</text><text x="97" y="79" fill="#1414f0" className="font-bold">y</text>
    </svg>
  );
}

function SectionDialog() {
  return (
    <div role="dialog" aria-label="Section Data" className={clsx("absolute top-[28px] right-[152px] w-[495px] rounded-t-md border border-[#1b3557] bg-[#1f4679] text-[13px] text-[#111]", DLG)}>
      <div className="flex h-[31px] items-center rounded-t-md border-b border-[#182f50] bg-[#1e3b62] pr-[12px] text-[#dfe6f0]">
        <h2 className={clsx("flex-1 pt-[7px] text-center text-[13px]", UI)}>Section Data</h2>
        <button aria-label="Close dialog" className="pt-[9px]"><WinGlyph kind="close" /></button>
      </div>
      <div className="mx-[7px] mb-[8px] bg-[#f0f0f0] pt-[12px] pr-[13px] pb-[12px] pl-[14px]">
        <div className="flex items-end pl-[2px]">
          <button className="h-[20px] w-[59px] border-t border-l border-white pb-[3px] leading-[16px]">DB/User</button>
          <button className="h-[22px] w-[54px] border-t border-r-2 border-white border-r-[#808080] pb-[4px] leading-[16px]">Value</button>
        </div>
        <div className="border-t border-r-2 border-b-2 border-l border-t-white border-r-[#808080] border-b-[#808080] border-l-[#dedede] pt-[26px] pr-[14px] pb-[26px] pl-[14px]">
          <div className="flex gap-[9px]">
            <div className="flex w-[145px] flex-col">
              <div className="flex items-center justify-between">
                <label htmlFor="sid">Section ID</label>
                <input id="sid" defaultValue="1" className={clsx("h-[22px] w-[73px] px-[3px] pb-[4px]", BOX)} />
              </div>
              <div className="mt-[18px] flex items-center justify-between">
                <label htmlFor="sname">Name</label>
                <input id="sname" defaultValue="Profile-1" className={clsx("h-[22px] w-[106px] px-[2px] pb-[4px]", BOX)} />
              </div>
            </div>
            <div className="flex flex-1 flex-col">
              <label className="relative flex h-[32px]">
                <select aria-label="Section type" className={clsx("w-full appearance-none pl-[32px] outline-none", BTN)}><option>General Section</option></select>
                <span className="pointer-events-none absolute inset-y-[3px] left-[3px] flex w-[26px] items-center justify-center bg-[#c2c2c2]">
                  <svg viewBox="0 0 26 26" className="h-[26px] w-[26px]" fill="none"><path d="M3 11h20M3 21h20" stroke="#f4f4f4" strokeWidth="2" /><path d="M6 8c0-6 14-6 14 0 0 5-7 4-7 10" stroke="#111" strokeWidth="5" /><path d="M6.500 8c0-5 13-5 13 0 0 5-6.500 4-6.500 9" stroke="#8a8a12" strokeWidth="2.500" /><path d="M11 20h5v4h-5z" fill="#8a8a12" stroke="#111" /></svg>
                </span>
                <Chevron d={DOWN} className="pointer-events-none absolute top-[11px] right-[4px] h-[10px] w-[10px] text-[#555]" />
              </label>
              <div className="mt-[14px]"><Check label="Built-Up Section" checked /></div>
            </div>
          </div>
          <div className="mt-[13px] flex gap-[10px]">
            <div className="w-[143px]">
              <UnknownShape />
              <div className="mt-[8px] pr-px"><SectionPreview /></div>
              <button className={clsx("mt-[7px] h-[47px] w-[141px]", BTN)}>Import SEC Files...</button>
              <div className="mt-[4px] flex h-[20px] justify-between pr-[3px] text-[#8a8a8a]">
                {["FEM", "Equation"].map((r) => (
                  <label key={r} className="flex items-center gap-[3px]">
                    <input type="radio" name="calc" disabled defaultChecked={r === "Equation"} className="h-[14px] w-[14px] appearance-none rounded-full border border-[#bcbcbc] bg-white checked:bg-[#bcbcbc] checked:shadow-[inset_0_0_0_3px_#f0f0f0]" />
                    {r}
                  </label>
                ))}
              </div>
              <div className="mt-[3px] flex justify-between pr-[2px]">
                <input aria-label="Equation file" disabled className="h-[22px] w-[110px] border border-[#7a7a7a] bg-[#f0f0f0]" />
                <button aria-label="Browse" className={clsx("mt-px h-[20px] w-[24px] leading-[12px]", BTN_OFF)}>...</button>
              </div>
              <p className="mt-[14px] leading-[18px]">Offset :&nbsp; Left-Bottom</p>
              <button className={clsx("mt-[4px] h-[20px] w-[140px] leading-[16px]", BTN)}>Change Offset ...</button>
            </div>
            <div className="flex-1">
              <div className="border border-[#dcdcdc] pt-[9px] pr-[9px] pb-[6px] pl-[7px]">
                <div className="flex h-[360px] border-t-2 border-l-2 border-[#696969]">
                  <table className="h-[357px] flex-1 self-start border-collapse leading-[16px]">
                    <thead>
                      <tr><th colSpan={3} className="border border-[#777] bg-[#0000ff] px-[3px] text-left font-normal text-[#e6e600]">Section Properties</th></tr>
                    </thead>
                    <tbody>
                      {props.map(([k, v, u]) => (
                        <tr key={k}>
                          <th scope="row" className="w-[62px] border border-[#777] px-[3px] text-left font-normal">{k}</th>
                          <td className="w-[105px] border border-[#777] bg-white px-[4px] text-right">{v}</td>
                          <td className="border border-[#777] px-[2px]">{u}</td>
                        </tr>
                      ))}
                    </tbody>
                  </table>
                  <div className="flex w-[18px] flex-col items-center bg-[#f0f0f0] text-[#444]">
                    <Chevron d={UP} className="my-[4px] h-[10px] w-[10px]" />
                    <span className="h-[203px] w-[15px] bg-[#cdcdcd]" />
                    <Chevron d={DOWN} className="mt-auto mb-[4px] h-[10px] w-[10px]" />
                  </div>
                </div>
              </div>
              <div className="mt-[6px] ml-[38px] flex flex-col whitespace-nowrap">
                <div className="flex h-[21px] items-center"><Check label="Consider Shear Deformation." /></div>
                <div className="flex h-[21px] items-center"><Check label="Consider Warping Effect(7th DOF)" /></div>
              </div>
            </div>
          </div>
        </div>
        <div className="mt-[8px] flex gap-[7px] pl-[2px] leading-[16px]">
          <button disabled className={clsx("mr-auto h-[20px] w-[193px]", BTN_OFF)}>Show Calculation Results...</button>
          <button className="h-[20px] w-[73px] border-2 border-[#0078d7] bg-[#e1e1e1] outline-1 -outline-offset-3 outline-[#222] outline-dotted">OK</button>
          <button className={clsx("h-[20px] w-[73px]", BTN)}>Cancel</button>
          <button disabled className={clsx("h-[20px] w-[73px]", BTN_OFF)}><u>A</u>pply</button>
        </div>
      </div>
    </div>
  );
}

/* ---------- bottom ---------- */

function ViewTabs() {
  return (
    <div className="flex h-[25px] shrink-0 border-t-2 border-[#5a7fae] bg-[#e8e8e8] text-[12px]">
      <span className="w-[18px] pt-[7px] pl-[5px]"><svg viewBox="0 0 6 10" className="h-[9px] w-[6px]" fill="none" stroke="#333"><path d="M5 1L1 5l4 4z" /></svg></span>
      <svg viewBox="0 0 22 23" className="-mt-[2px] h-[23px] w-[22px]" aria-hidden><path d="M0 0l22 22V0z" fill="#fff" /><path d="M0 0l22 22" stroke="#5a7fae" strokeWidth="1.500" /></svg>
      <button className="-mt-[2px] flex h-[23px] items-center gap-[9px] rounded-br border-r-2 border-b-2 border-[#5a7fae] bg-white pr-[5px] pl-[7px] font-bold text-[#222]"><Logo className="h-[16px] w-[16px]" />MIDAS/Civil</button>
      <span className="ml-auto pt-[7px] pr-[12px]"><svg viewBox="0 0 6 10" className="h-[9px] w-[6px]" fill="none" stroke="#333"><path d="M1 1l4 4-4 4z" /></svg></span>
    </div>
  );
}

function MessageWindow() {
  return (
    <div className="mt-[5px] shrink-0">
      <div className="flex h-[22px] items-center bg-[#203e68] pr-[7px] pl-[4px] text-[12px] text-[#d7deea]">Message Window<PinClose /></div>
      <div className="border-t-4 border-l-2 border-[#8c8c8c] bg-[#f0f0f0] pb-[2px]">
        <div className="h-[19px] bg-[#f4f4f4] pl-[2px] text-[14px] leading-[19px] text-[#444]">&gt;&gt;</div>
        <div className="flex h-[19px] items-stretch">
          {["M9 1v8L4 5zM2 1v8", "M7 1v8L2 5z", "M2 1v8l5-4z", "M1 1v8l5-4zM8 1v8"].map((d) => (
            <button key={d} aria-label="Scroll sheets" className="flex w-[19px] items-center justify-center border-r-2 border-b border-[#999] text-[#aaa]"><svg viewBox="0 0 10 10" className="h-[10px] w-[10px]" fill="currentColor" stroke="currentColor"><path d={d} /></svg></button>
          ))}
          <div className="flex min-w-0 flex-1 items-stretch border-t-2 border-r-4 border-[#444] text-[12px] leading-[16px] [border-right-style:double]">
            <svg viewBox="0 0 8 17" className="h-[17px] w-[8px]" aria-hidden><path d="M1 0h7v17z" fill="#fff" /><path d="M1 0l6 17" stroke="#111" /></svg>
            <button className="bg-white pr-[5px] font-['Liberation_Sans',sans-serif] font-bold">Command Message</button>
            <svg viewBox="0 0 12 17" className="h-[17px] w-[12px]" aria-hidden><path d="M0 0h7L0 17z" fill="#fff" /><path d="M8 0L1 17M5 8l5 9" stroke="#111" fill="none" /></svg>
            <button className="px-[6px] font-['Liberation_Sans',sans-serif]">Analysis Message</button>
            <svg viewBox="0 0 12 17" className="h-[17px] w-[12px]" aria-hidden><path d="M11 0L5 17" stroke="#111" strokeWidth="1.500" /></svg>
          </div>
          <div className="flex w-[565px] items-center px-[4px] text-[#333]">
            <Chevron d={LEFT} />
            <span className="ml-[4px] h-[16px] w-[18px] bg-[#cdcdcd]" />
            <Chevron d={RIGHT} className="ml-auto h-[10px] w-[10px]" />
          </div>
        </div>
      </div>
    </div>
  );
}

function SideBar() {
  const sets = [
    ["zoomAll", "zoomWin", "zoomIn", "zoomOut", "zoomFit"],
    ["magPlus", "panHand", "orbit"],
    ["winRedraw", "winFit", "|", "cubeIso", "cubeTop", "cubeRight", "cubeFront", "axes", "|", "winArrow", "winHand"],
  ];
  return (
    <div className="w-[27px] shrink-0">
      {sets.map((set) => (
        <div key={set[0]} className="flex flex-col items-center rounded bg-[#ebebeb] pb-[2px]">
          <span className="mt-[3px] mb-[3px] h-[4px] w-[16px] bg-[repeating-linear-gradient(90deg,#7e93b0_0_1px,transparent_1px_2px)]" />
          {set.map((n, i) => n === "|" ? <span key={i} className="my-[3px] h-[2px] w-[15px] bg-[#c4c4c4]" /> : <Tool key={n} name={n} />)}
        </div>
      ))}
    </div>
  );
}

function StatusSelect({ value, width }: { value: string; width: string }) {
  return (
    <label className={clsx("relative flex border border-[#c4c4c4] bg-[#e6e6e6] text-[#111]", width)}>
      <select aria-label={value} className="w-full appearance-none bg-transparent pl-[3px] text-[13px] outline-none"><option>{value}</option></select>
      <Chevron d={DOWN} className="pointer-events-none absolute top-[5px] right-[4px] h-[10px] w-[10px] text-[#555]" />
    </label>
  );
}

function Spin({ value, off }: { value: string; off?: boolean }) {
  return (
    <span className={clsx("flex items-stretch", off && "text-[#888]")}>
      <input aria-label={`Step ${value}`} defaultValue={value} disabled={off} className={clsx("border border-[#999] text-center text-[13px]", off ? "w-[18px] border-transparent" : "w-[34px] bg-white")} />
      <span className="flex w-[15px] flex-col items-center justify-center gap-[4px] bg-[#e4e4e4]">
        <span className="h-0 w-0 border-x-[3px] border-b-[4px] border-x-transparent border-b-current" />
        <span className="h-0 w-0 border-x-[3px] border-t-[4px] border-x-transparent border-t-current" />
      </span>
    </span>
  );
}

function StatusBar() {
  return (
    <footer className="flex h-[19px] shrink-0 items-stretch border-b border-[#222] bg-[#1d3a64] text-[12px] leading-[22px] text-[#dfe5ee]">
      <span className="flex-1 pl-[6px]">For Help, press F1</span>
      <span className="w-[87px] border-l-2 border-[#7f90ab] pl-[9px] font-medium">None!</span>
      <span className="w-[178px] border-l-2 border-[#7f90ab] pl-[3px] font-medium">U: 0, 0, 0</span>
      <span className="w-[178px] border-l-2 border-[#7f90ab] pl-[3px] font-medium">G: 0, 0, 0</span>
      <div className={clsx("flex border-l-2 border-[#7f90ab] leading-[16px]", DLG)}>
        <StatusSelect value="tonf" width="mr-[3px] w-[52px]" />
        <StatusSelect value="m" width="mr-[2px] w-[52px]" />
        <div className="flex items-stretch bg-[#f0f0f0] pl-[6px] text-[#111]">
          <button aria-label="Node filter" className="mt-px mr-[6px] w-[18px] border border-[#7fdede] bg-[#c9c9c9]"><svg viewBox="0 0 16 16" className="h-[16px] w-[16px]" fill="none" stroke="#666" strokeWidth="1.500"><path d="M8 0v4M8 12v4M0 8h4M12 8h4" /><circle cx="8" cy="8" r="3.500" /></svg></button>
          <button aria-label="Element filter" className="mt-px mr-[6px] w-[18px] border border-[#7fdede] bg-[#c9c9c9]"><svg viewBox="0 0 16 16" className="h-[16px] w-[16px]" fill="none" stroke="#666" strokeWidth="1.500"><path d="M7 1v14M3 4v9M1 8h6M9 4h6M9 12h6M11 2L9 4l2 2M11 10l-2 2 2 2" /></svg></button>
          <button aria-label="Play" className="mt-px mr-[6px] w-[18px] border border-[#7fdede] bg-[#c9c9c9]"><svg viewBox="0 0 16 16" className="h-[16px] w-[16px]" fill="#666"><path d="M5 2v12l7-6z" /></svg></button>
          <StatusSelect value="non" width="mr-[6px] w-[46px]" />
          <button aria-label="Query" className="mt-px mr-[6px] w-[18px] border-2 border-[#1fe5e5] bg-white text-[13px] leading-[13px] font-bold">?</button>
          <span className="mt-px mr-[3px] w-[18px] bg-[#00ffff]" />
          <Spin value="1" off />
          <span className="w-[16px] text-center text-[14px] leading-[17px]">/</span>
          <Spin value="2" />
          <span className="w-[5px]" />
        </div>
      </div>
    </footer>
  );
}

export default function App() {
  return (
    <div className={clsx("flex h-screen flex-col overflow-hidden bg-[#162f54]", UI)}>
      <Header />
      <Ribbon />
      <Toolbar />
      <div className="flex min-h-0 flex-1">
        <TreePanel />
        <main className="ml-[7px] flex min-w-0 flex-1 flex-col">
          <ModelView><SectionDialog /></ModelView>
          <ViewTabs />
          <MessageWindow />
        </main>
        <SideBar />
      </div>
      <StatusBar />
    </div>
  );
}
